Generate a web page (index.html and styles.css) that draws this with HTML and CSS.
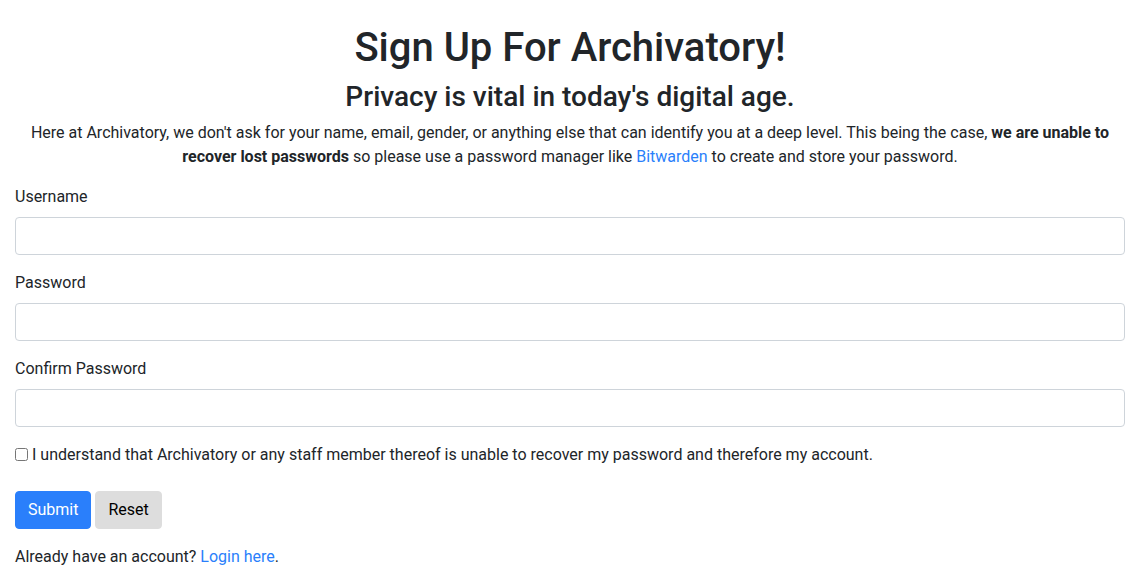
FILE: index.html
```html
<!DOCTYPE html>
<html lang="en">
<head>
<meta charset="utf-8">
<title>Sign Up For Archivatory!</title>
<link rel="stylesheet" href="styles.css">
</head>
<body>
<div class="container">
  <div class="intro">
    <h1 class="title">Sign Up For Archivatory!</h1>
    <h2 class="subtitle">Privacy is vital in today's digital age.</h2>
    <p class="lead-text">Here at Archivatory, we don't ask for your name, email, gender, or anything else that can identify you at a deep level. This being the case, <b>we are unable to recover lost passwords</b> so please use a password manager like <a href="#">Bitwarden</a> to create and store your password.</p>
  </div>
  <form class="signup">
    <div class="form-group">
      <label class="field-label" for="username">Username</label>
      <input class="form-control" type="text" id="username">
    </div>
    <div class="form-group">
      <label class="field-label" for="password">Password</label>
      <input class="form-control" type="password" id="password">
    </div>
    <div class="form-group">
      <label class="field-label" for="confirm">Confirm Password</label>
      <input class="form-control" type="password" id="confirm">
    </div>
    <div class="check-row">
      <input class="check" type="checkbox" id="understand">
      <label for="understand">I understand that Archivatory or any staff member thereof is unable to recover my password and therefore my account.</label>
    </div>
    <div class="actions">
      <button class="btn btn-primary" type="submit">Submit</button>
      <button class="btn btn-reset" type="reset">Reset</button>
    </div>
  </form>
  <p class="login">Already have an account? <a href="#">Login here</a>.</p>
</div>
</body>
</html>
```
FILE: styles.css
```css
* { box-sizing: border-box; }
html, body { margin: 0; padding: 0; }
body {
  font-family: Roboto, "Liberation Sans", Arial, sans-serif;
  font-size: 16px;
  line-height: 1.5;
  color: #212529;
  background: #fff;
}
.container {
  padding: 24px 15px 0;
}
.intro { text-align: center; }
.title {
  font-size: 40px;
  font-weight: 500;
  line-height: 1.2;
  margin: 0 0 8px;
}
.subtitle {
  font-size: 28px;
  font-weight: 500;
  line-height: 1.2;
  margin: 0 0 7px;
}
.lead-text { margin: 0 0 16px; }
.lead-text b { font-weight: 700; }
a { color: #2a7ffb; text-decoration: none; }
.signup { margin: 0; }
.form-group { margin-bottom: 16px; display: flex; flex-direction: column; }
.field-label { display: block; margin-bottom: 8px; }
.form-control {
  display: block;
  width: 100%;
  height: 38px;
  padding: 6px 12px;
  font: inherit;
  color: #495057;
  background: #fff;
  border: 1px solid #ced4da;
  border-radius: 4px;
  outline: none;
}
.check-row {
  display: flex;
  align-items: center;
  height: 24px;
  margin-bottom: 24px;
}
.check {
  width: 13px;
  height: 13px;
  margin: 0 4px 0 0;
  flex: none;
}
.actions { display: flex; gap: 4px; margin-bottom: 16px; }
.btn {
  font: inherit;
  height: 38px;
  padding: 6px 12px;
  border: 1px solid transparent;
  border-radius: 4px;
  line-height: 1.5;
  cursor: pointer;
}
.btn-primary { background: #2a7ffb; border-color: #2a7ffb; color: #fff; }
.btn-reset { background: #dddddd; border-color: #dddddd; color: #000; }
.login { margin: 0; }
```
